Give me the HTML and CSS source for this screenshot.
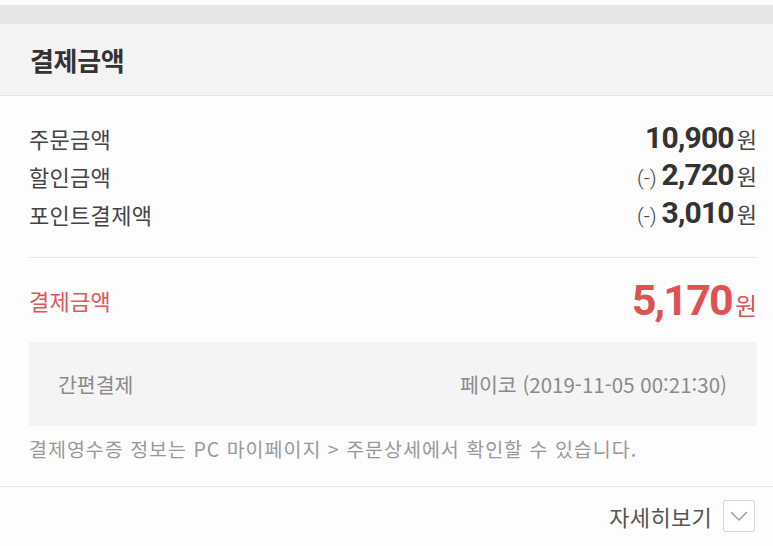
FILE: index.html
```html
<!DOCTYPE html>
<html lang="ko">
<head>
<meta charset="utf-8">
<link rel="stylesheet" href="styles.css">
</head>
<body>
<div class="page">
  <div class="top-gap"></div>
  <div class="band"></div>
  <div class="header"><h1 class="title">결제금액</h1></div>
  <div class="content">
    <div class="rows">
      <div class="row"><span class="label">주문금액</span><span class="amount"><b class="num">10,900</b><span class="won">원</span></span></div>
      <div class="row"><span class="label">할인금액</span><span class="amount"><span class="minus">(-)</span><b class="num">2,720</b><span class="won">원</span></span></div>
      <div class="row"><span class="label">포인트결제액</span><span class="amount"><span class="minus">(-)</span><b class="num">3,010</b><span class="won">원</span></span></div>
    </div>
    <div class="total">
      <span class="total-label">결제금액</span>
      <span class="amount"><b class="total-num">5,170</b><span class="won total-won">원</span></span>
    </div>
    <div class="paybox">
      <span>간편결제</span>
      <span>페이코 (2019-11-05 00:21:30)</span>
    </div>
    <p class="note">결제영수증 정보는 PC 마이페이지 &gt; 주문상세에서 확인할 수 있습니다.</p>
  </div>
  <div class="footer">
    <span class="more">자세히보기</span>
    <span class="chev"><svg width="18" height="10" viewBox="0 0 18 10"><path d="M1 1 L9 9 L17 1" fill="none" stroke="#9a9a9a" stroke-width="1.4"/></svg></span>
  </div>
</div>
</body>
</html>
```

FILE: styles.css
```css
html, body {
  margin: 0;
  padding: 0;
  background: #ffffff;
}
.page {
  width: 773px;
  height: 546px;
  overflow: hidden;
  font-family: "Noto Sans CJK KR", "Noto Sans", sans-serif;
  color: #333;
  background: #fdfdfd;
}
.top-gap {
  height: 5px;
  background: #fbfbfb;
}
.band {
  height: 19px;
  background: #e6e6e6;
}
.header {
  height: 71px;
  background: #f3f3f3;
  border-bottom: 1px solid #e3e3e3;
  display: flex;
  align-items: center;
  padding-left: 30px;
}
.title {
  margin: 0;
  font-size: 26px;
  line-height: 1.2;
  font-weight: 700;
  color: #333;
  letter-spacing: -0.3px;
}
.content {
  padding: 0 16px 0 29px;
}
.rows {
  padding-top: 23px;
  padding-bottom: 24px;
  border-bottom: 1px solid #e6e6e6;
}
.row {
  height: 38px;
  display: flex;
  justify-content: space-between;
  align-items: center;
}
.label {
  font-size: 22px;
  line-height: 30px;
  letter-spacing: 0.3px;
  color: #444;
}
.amount {
  display: flex;
  align-items: baseline;
  line-height: 34px;
}
.num {
  font-family: Roboto, "Noto Sans", sans-serif;
  font-size: 30px;
  line-height: 34px;
  font-weight: 700;
  color: #333;
  letter-spacing: -0.8px;
}
.minus {
  font-family: Roboto, sans-serif;
  font-size: 21px;
  line-height: 34px;
  color: #444;
  margin-right: 5px;
  font-weight: 300;
}
.won {
  font-size: 22px;
  line-height: 30px;
  color: #444;
  margin-left: 3px;
}
.total {
  height: 84px;
  display: flex;
  justify-content: space-between;
  align-items: center;
}
.total-label {
  font-size: 22px;
  letter-spacing: 0.3px;
  color: #e05656;
}
.total .amount {
  line-height: 50px;
}
.total-num {
  font-family: Roboto, "Noto Sans", sans-serif;
  font-size: 43px;
  line-height: 50px;
  font-weight: 700;
  color: #e05252;
  letter-spacing: -1.8px;
}
.total-won {
  color: #e05252;
  font-size: 24px;
  line-height: 40px;
}
.paybox {
  height: 84px;
  background: #f4f4f4;
  display: flex;
  justify-content: space-between;
  align-items: center;
  padding: 0 30px 0 29px;
  font-size: 20.5px;
  color: #8a8a8a;
}
.note {
  margin: 11px 0 0 0;
  padding-bottom: 25px;
  line-height: 24px;
  font-size: 19.5px;
  letter-spacing: 1px;
  color: #999;
}
.footer {
  border-top: 1px solid #e6e6e6;
  height: 58px;
  display: flex;
  justify-content: flex-end;
  align-items: center;
  padding-right: 18px;
  gap: 11px;
}
.more {
  font-size: 22px;
  letter-spacing: 0.3px;
  color: #555;
}
.chev {
  width: 30px;
  height: 30px;
  border: 1px solid #d6d6d6;
  border-radius: 2px;
  background: #fff;
  display: flex;
  align-items: center;
  justify-content: center;
}
```
